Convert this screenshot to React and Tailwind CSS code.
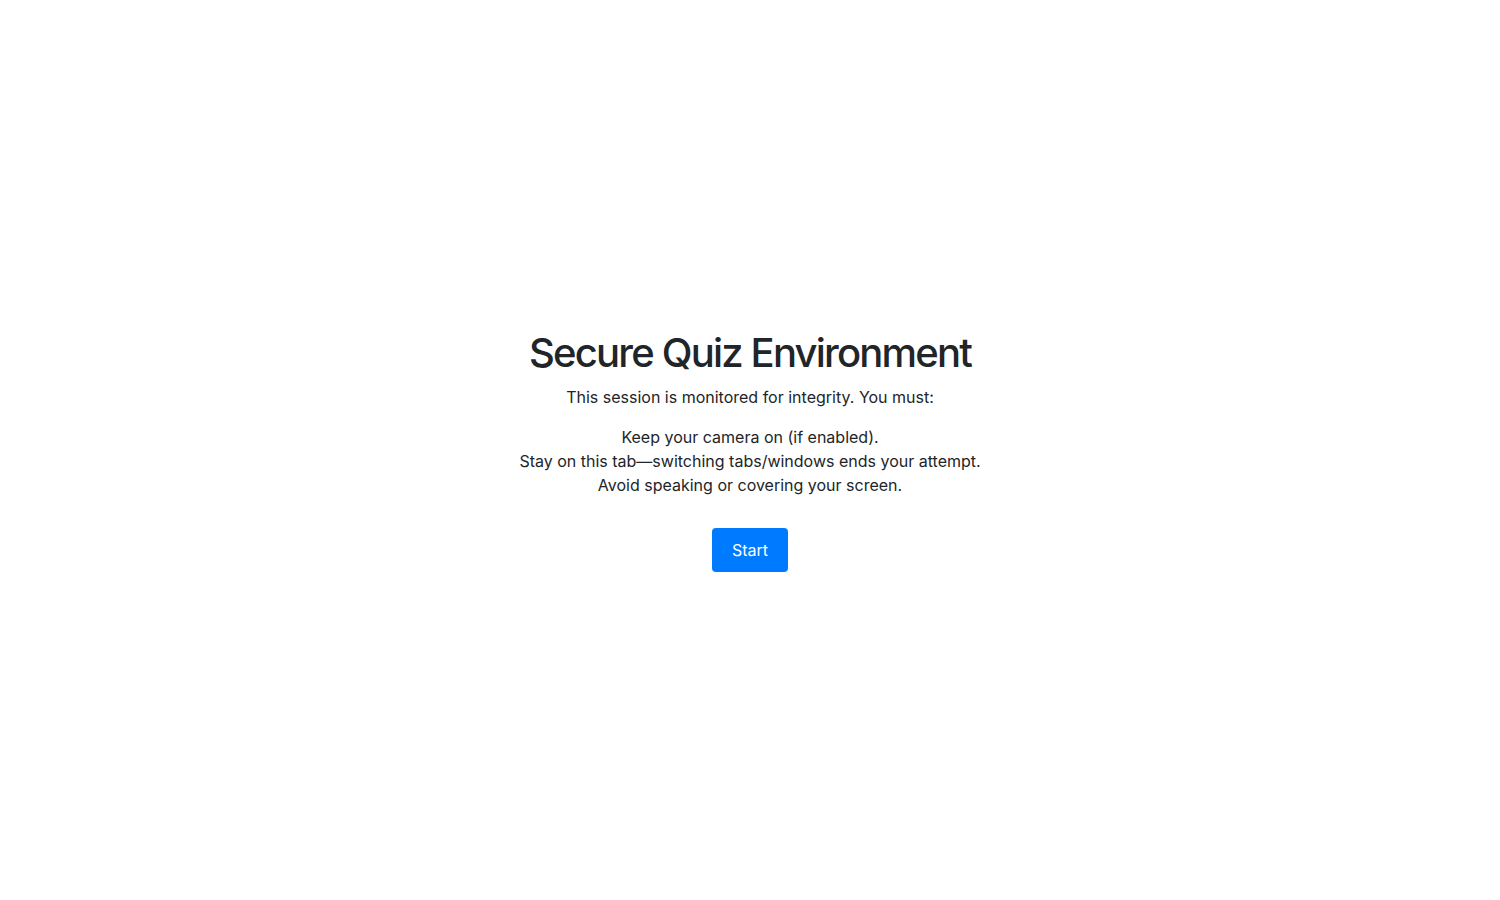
export default function App() {
    return (
        <div className="min-h-screen flex items-center justify-center bg-white text-[#212529] font-['Inter','Liberation_Sans',sans-serif]">
            <div className="flex flex-col items-center text-center">
                <h1 className="text-[40px] leading-[48px] font-medium tracking-[-0.045em] mb-2">Secure Quiz Environment</h1>
                <p className="text-base leading-6 mb-4">This session is monitored for integrity. You must:</p>
                <ul className="text-base leading-6 mb-4">
                    <li>Keep your camera on (if enabled).</li>
                    <li>Stay on this tab—switching tabs/windows ends your attempt.</li>
                    <li>Avoid speaking or covering your screen.</li>
                </ul>
                <button className="mt-[15px] px-5 py-2.5 text-base leading-6 text-white bg-[#007bff] rounded">
                    Start
                </button>
            </div>
        </div>
    );
}
